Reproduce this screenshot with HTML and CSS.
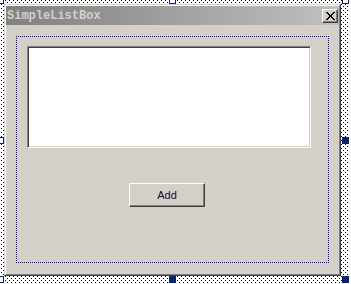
FILE: index.html
```html
<!DOCTYPE html>
<html>
<head>
<meta charset="utf-8">
<link rel="stylesheet" href="styles.css">
</head>
<body>
<div class="frame">
  <div class="form">
    <div class="form-inner">
      <div class="titlebar">
        <span class="title">SimpleListBox</span>
        <span class="close">
          <svg width="9" height="8" viewBox="0 0 9 8" shape-rendering="crispEdges"><path d="M0 0h2v1h1v1h1v1h1V2h1V1h1V0h2v1H8v1H7v1H6v2h1v1h1v1h1v1H7V7H6V6H5V5H4v1H3v1H2v1H0V7h1V6h1V5h1V3H2V2H1V1H0z" fill="#000"/></svg>
        </span>
      </div>
      <div class="client">
        <div class="panel">
          <div class="listbox"></div>
          <button class="btn">Add</button>
        </div>
      </div>
    </div>
  </div>
  <span class="handle h-tl"></span>
  <span class="handle h-tm"></span>
  <span class="handle h-tr"></span>
  <span class="handle h-ml"></span>
  <span class="handle h-bl"></span>
  <span class="handle active h-mr"></span>
  <span class="handle active h-bm"></span>
  <span class="handle active h-br"></span>
</div>
</body>
</html>
```
FILE: styles.css
```css
html, body {
  margin: 0;
  padding: 0;
  background: #ffffff;
}
body {
  width: 351px;
  height: 284px;
  overflow: hidden;
}
.frame {
  position: relative;
  width: 348px;
  height: 283px;
  box-sizing: border-box;
  padding: 4px 7px 7px 4px;
  background: #ffffff;
}
.frame::before,
.frame::after {
  content: "";
  position: absolute;
  inset: 0;
  background: repeating-linear-gradient(to right, #000 0 1px, transparent 1px 4px);
  -webkit-mask-image: repeating-linear-gradient(to bottom, #000 0 1px, transparent 1px 4px);
  mask-image: repeating-linear-gradient(to bottom, #000 0 1px, transparent 1px 4px);
  background-position: 1px 0;
}
.frame::after {
  background-position: 3px 0;
  -webkit-mask-position: 0 2px;
  mask-position: 0 2px;
}
.form {
  position: relative;
  z-index: 1;
  width: 337px;
  height: 272px;
  box-sizing: border-box;
  border: 1px solid;
  border-color: #d4d0c8 #404040 #404040 #d4d0c8;
  background: #d4d0c8;
}
.form-inner {
  height: 100%;
  box-sizing: border-box;
  border: 1px solid;
  border-color: #ffffff #808080 #808080 #ffffff;
  display: flex;
  flex-direction: column;
}
.titlebar {
  height: 19px;
  display: flex;
  align-items: center;
  justify-content: space-between;
  padding: 0 1px 0 1px;
  background: linear-gradient(to right, #808080, #c0c0c0);
}
.title {
  font-family: "Liberation Mono", monospace;
  font-weight: bold;
  font-size: 12px;
  color: #d4d0c8;
}
.close {
  width: 16px;
  height: 14px;
  box-sizing: border-box;
  display: flex;
  align-items: center;
  justify-content: center;
  background: #d4d0c8;
  border: 1px solid;
  border-color: #ffffff #404040 #404040 #ffffff;
  box-shadow: inset -1px -1px 0 #808080;
}
.client {
  flex: 1;
  padding: 11px 10px 11px 10px;
  display: flex;
}
.panel {
  flex: 1;
  padding: 10px 0 0 11px;
  display: flex;
  flex-direction: column;
  align-items: flex-start;
  background-image:
    repeating-linear-gradient(to right, #0000ff 0 1px, transparent 1px 2px),
    repeating-linear-gradient(to right, #0000ff 0 1px, transparent 1px 2px),
    repeating-linear-gradient(to bottom, #0000ff 0 1px, transparent 1px 2px),
    repeating-linear-gradient(to bottom, #0000ff 0 1px, transparent 1px 2px);
  background-size: 100% 1px, 100% 1px, 1px 100%, 1px 100%;
  background-position: left top, left bottom, left top, right top;
  background-repeat: no-repeat;
}
.listbox {
  width: 284px;
  height: 102px;
  box-sizing: border-box;
  background: #ffffff;
  border: 1px solid;
  border-color: #808080 #ffffff #ffffff #808080;
  box-shadow: inset 1px 1px 0 #404040, inset -1px -1px 0 #d4d0c8;
}
.btn {
  margin: 35px 0 0 102px;
  width: 76px;
  height: 24px;
  box-sizing: border-box;
  padding: 0;
  background: #d4d0c8;
  border: 1px solid;
  border-color: #ffffff #404040 #404040 #ffffff;
  box-shadow: inset -1px -1px 0 #808080;
  font-family: "Liberation Sans", Arial, sans-serif;
  font-size: 11px;
  color: #0a0a30;
}
.handle {
  position: absolute;
  z-index: 2;
  width: 7px;
  height: 7px;
  box-sizing: border-box;
  background: #ffffff;
  border: 1px solid #0a246a;
}
.handle.active {
  background: #0a246a;
}
.h-tl { left: -3px; top: -3px; }
.h-tm { left: 169px; top: -3px; }
.h-tr { left: 342px; top: -3px; }
.h-ml { left: -3px; top: 137px; }
.h-bl { left: -3px; top: 276px; }
.h-mr { left: 342px; top: 137px; }
.h-bm { left: 169px; top: 276px; }
.h-br { left: 342px; top: 276px; }
```
